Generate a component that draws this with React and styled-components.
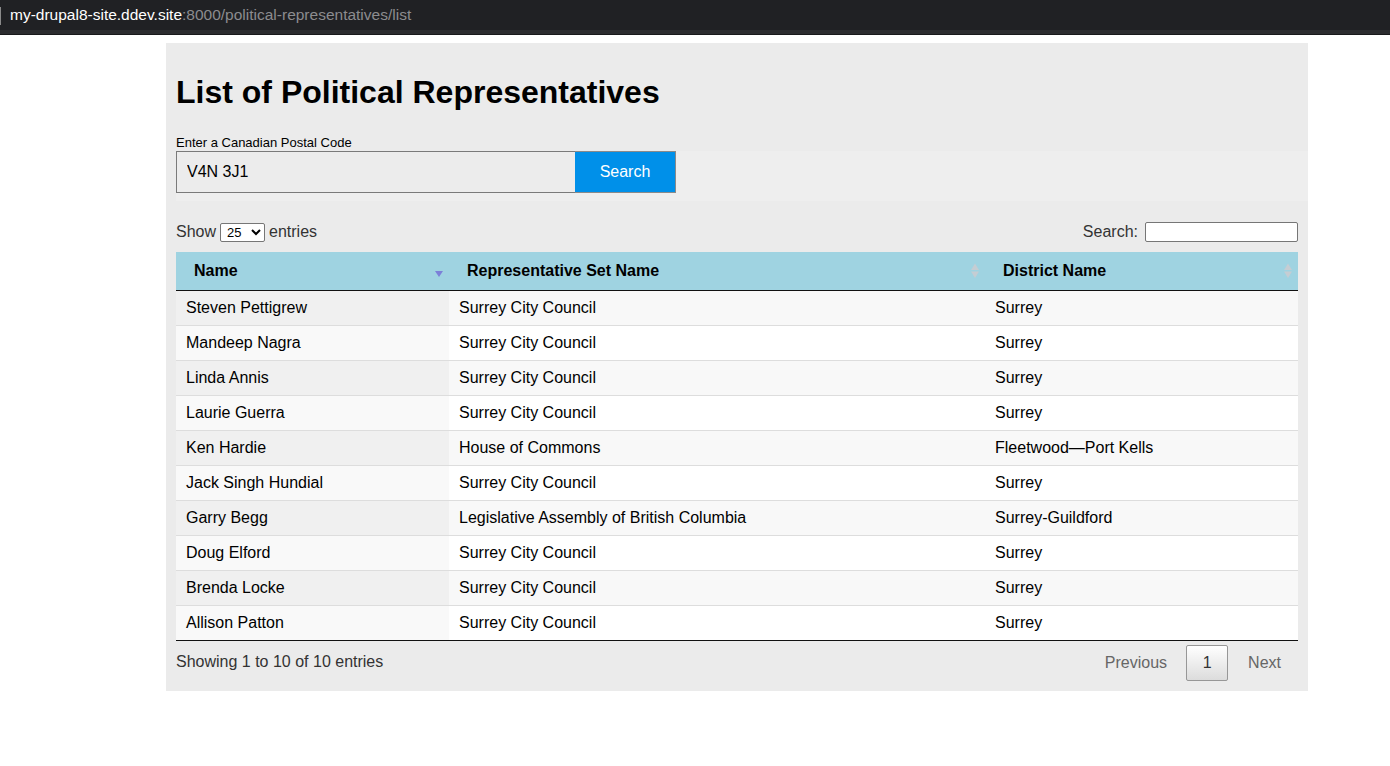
import React from "react";
import styled, { createGlobalStyle } from "styled-components";

const GlobalStyle = createGlobalStyle`
  body {
    margin: 0;
    background: #ffffff;
    font-family: "Liberation Sans", Arial, sans-serif;
    color: #000;
  }
`;

const BrowserBar = styled.div`
  height: 30px;
  background: #202124;
  border-bottom: 4px solid #2b2c2f;
  box-shadow: 0 1px 0 #18191b;
  margin-bottom: 1px;
  display: flex;
  align-items: center;
  padding-left: 10px;
  position: relative;
  font-size: 15.5px;
  &::before {
    content: "";
    position: absolute;
    left: 0;
    top: 7px;
    width: 1px;
    height: 18px;
    background: #8a8a8a;
  }
`;

const Host = styled.span`
  color: #ffffff;
`;

const UrlPath = styled.span`
  color: #8c8c8f;
`;

const Page = styled.div`
  padding: 8px 0 0 166px;
`;

const Container = styled.div`
  width: 1122px;
  background: #ebebeb;
  padding: 10px 10px 10px;
`;

const Title = styled.h1`
  font-size: 32px;
  font-weight: 700;
  margin: 21px 0 24px;
  line-height: 37px;
`;

const SearchForm = styled.form`
  margin: 0 -10px 19px 0;
  padding-bottom: 8px;
  background: #eeeeee;
`;

const Label = styled.label`
  display: block;
  font-size: 13px;
  line-height: 15px;
  padding-bottom: 1px;
  background: #ebebeb;
`;

const FormRow = styled.div`
  display: flex;
  height: 42px;
`;

const PostalInput = styled.input`
  box-sizing: border-box;
  width: 399px;
  height: 42px;
  border: 1px solid #7a7a7a;
  border-right: none;
  background: #ececec;
  padding: 0 10px;
  font-family: inherit;
  font-size: 16px;
  color: #000;
  outline: none;
`;

const SearchButton = styled.button`
  box-sizing: border-box;
  width: 101px;
  height: 42px;
  border: 1px solid #8a8a8a;
  border-left: none;
  background: #0090e9;
  color: #fff;
  font-family: inherit;
  font-size: 16px;
  cursor: pointer;
`;

const Controls = styled.div`
  display: flex;
  justify-content: space-between;
  align-items: center;
  height: 24px;
  margin-bottom: 8px;
  font-size: 16px;
  color: #333;
`;

const LengthControl = styled.label`
  display: flex;
  align-items: center;
  gap: 4px;
`;

const SmallSelect = styled.select`
  width: 45px;
  height: 19px;
  font-size: 13px;
  padding: 0 0 0 2px;
  border: 1px solid #767676;
  border-radius: 2px;
  background: #fff;
  font-family: inherit;
`;

const FilterControl = styled.label`
  display: flex;
  align-items: center;
  gap: 7px;
`;

const FilterInput = styled.input`
  box-sizing: border-box;
  width: 153px;
  height: 20px;
  border: 1px solid #767676;
  border-radius: 2px;
  background: #fff;
`;

const Table = styled.table`
  width: 1122px;
  border-collapse: collapse;
  table-layout: fixed;
  font-size: 16px;
`;

const HeadCell = styled.th`
  position: relative;
  box-sizing: border-box;
  width: ${(p) => p.$w}px;
  height: 38px;
  padding: 0 18px;
  text-align: left;
  font-weight: 700;
  background: #9fd3e1;
  border-bottom: 1px solid #111;
`;

const SortIcon = styled.svg`
  position: absolute;
  right: 5px;
  top: 10px;
  width: 10px;
  height: 18px;
`;

const Row = styled.tr`
  height: 35px;
  border-top: 1px solid #dddddd;
  &:first-child {
    border-top: none;
  }
  &:last-child {
    border-bottom: 1px solid #111;
  }
`;

const Cell = styled.td`
  padding: 1px 10px 0;
  background: ${(p) =>
    p.$sorted ? (p.$odd ? "#f0f0f0" : "#f9f9f9") : p.$odd ? "#f8f8f8" : "#ffffff"};
`;

const Footer = styled.div`
  display: flex;
  justify-content: space-between;
  align-items: flex-start;
  font-size: 16px;
  color: #333;
`;

const Info = styled.div`
  padding-top: 12px;
`;

const Pagination = styled.div`
  display: flex;
  align-items: center;
  padding-top: 4px;
`;

const PageLink = styled.span`
  color: #666;
  padding: 0 ${(p) => p.$right}px 0 ${(p) => p.$left}px;
`;

const PageButton = styled.span`
  box-sizing: border-box;
  display: flex;
  align-items: center;
  justify-content: center;
  width: 42px;
  height: 36px;
  border: 1px solid #979797;
  border-radius: 2px;
  background: linear-gradient(to bottom, #ffffff 0%, #dcdcdc 100%);
  color: #333;
`;

const rows = [
  ["Steven Pettigrew", "Surrey City Council", "Surrey"],
  ["Mandeep Nagra", "Surrey City Council", "Surrey"],
  ["Linda Annis", "Surrey City Council", "Surrey"],
  ["Laurie Guerra", "Surrey City Council", "Surrey"],
  ["Ken Hardie", "House of Commons", "Fleetwood—Port Kells"],
  ["Jack Singh Hundial", "Surrey City Council", "Surrey"],
  ["Garry Begg", "Legislative Assembly of British Columbia", "Surrey-Guildford"],
  ["Doug Elford", "Surrey City Council", "Surrey"],
  ["Brenda Locke", "Surrey City Council", "Surrey"],
  ["Allison Patton", "Surrey City Council", "Surrey"],
];

// datatables style sort indicators
function SortArrows({ active }) {
  if (active) {
    return (
      <SortIcon viewBox="0 0 10 18">
        <path d="M1 9 L9 9 L5 15 Z" fill="#7c80d8" />
      </SortIcon>
    );
  }
  return (
    <SortIcon viewBox="0 0 10 18">
      <path d="M1 8 L9 8 L5 1.5 Z" fill="#c5cdd3" />
      <path d="M1 9.5 L9 9.5 L5 16 Z" fill="#c5cdd3" />
    </SortIcon>
  );
}

export default function App() {
  return (
    <>
      <GlobalStyle />
      <BrowserBar>
        <Host>my-drupal8-site.ddev.site</Host>
        <UrlPath>:8000/political-representatives/list</UrlPath>
      </BrowserBar>
      <Page>
        <Container>
          <Title>List of Political Representatives</Title>
          <SearchForm onSubmit={(e) => e.preventDefault()}>
            <Label htmlFor="postal">Enter a Canadian Postal Code</Label>
            <FormRow>
              <PostalInput id="postal" defaultValue="V4N 3J1" />
              <SearchButton type="submit">Search</SearchButton>
            </FormRow>
          </SearchForm>
          <Controls>
            <LengthControl>
              Show
              <SmallSelect defaultValue="25">
                <option value="10">10</option>
                <option value="25">25</option>
                <option value="50">50</option>
                <option value="100">100</option>
              </SmallSelect>
              entries
            </LengthControl>
            <FilterControl>
              Search:
              <FilterInput type="search" />
            </FilterControl>
          </Controls>
          <Table>
            <thead>
              <tr>
                <HeadCell $w={273}>
                  Name
                  <SortArrows active />
                </HeadCell>
                <HeadCell $w={536}>
                  Representative Set Name
                  <SortArrows />
                </HeadCell>
                <HeadCell $w={313}>
                  District Name
                  <SortArrows />
                </HeadCell>
              </tr>
            </thead>
            <tbody>
              {rows.map((r, i) => (
                <Row key={r[0]}>
                  <Cell $sorted $odd={i % 2 === 0}>{r[0]}</Cell>
                  <Cell $odd={i % 2 === 0}>{r[1]}</Cell>
                  <Cell $odd={i % 2 === 0}>{r[2]}</Cell>
                </Row>
              ))}
            </tbody>
          </Table>
          <Footer>
            <Info>Showing 1 to 10 of 10 entries</Info>
            <Pagination>
              <PageLink $left={19} $right={19}>Previous</PageLink>
              <PageButton>1</PageButton>
              <PageLink $left={20} $right={17}>Next</PageLink>
            </Pagination>
          </Footer>
        </Container>
      </Page>
    </>
  );
}
